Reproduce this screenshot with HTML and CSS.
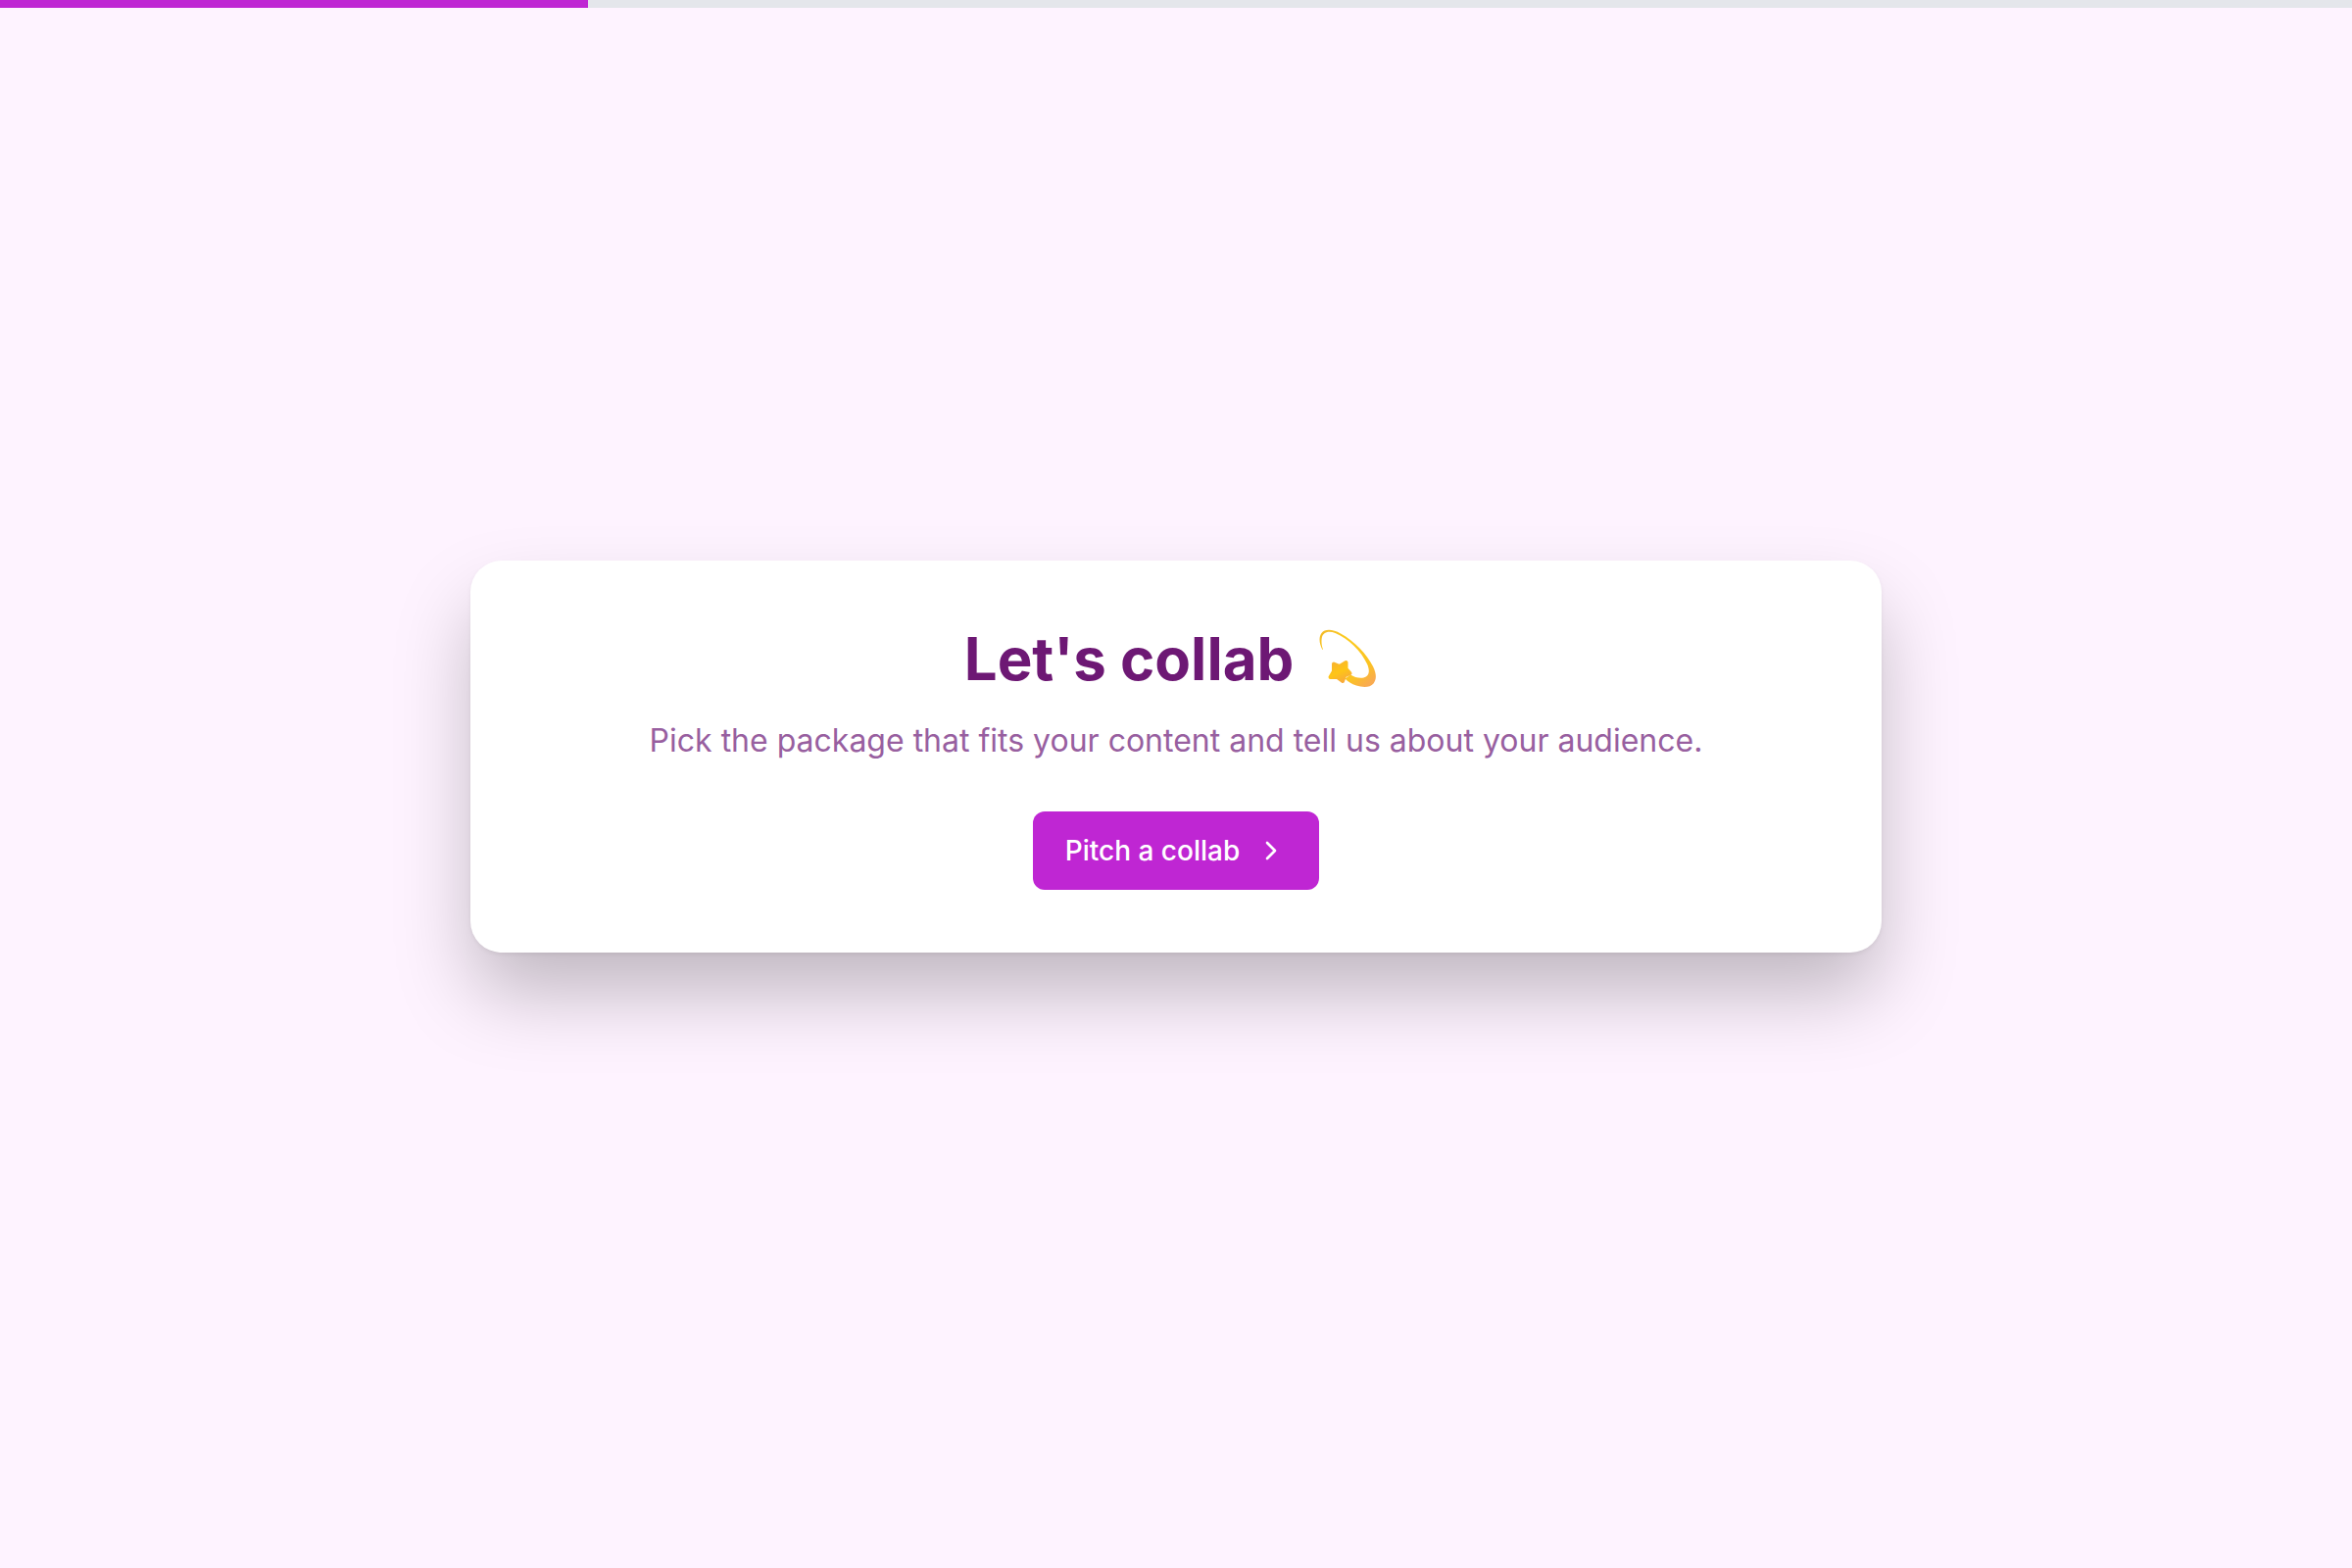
FILE: index.html
```html
<!DOCTYPE html>
<html lang="en">
<head>
  <meta charset="UTF-8">
  <meta name="viewport" content="width=device-width, initial-scale=1">
  <title>Let's collab</title>
  <link rel="stylesheet" href="styles.css">
</head>
<body>
  <div class="progress" role="progressbar" aria-label="Progress" aria-valuemin="0" aria-valuemax="100" aria-valuenow="25">
    <div class="progress-fill" style="width: 25%"></div>
  </div>

  <main>
    <section class="card">
      <h1>
        Let's collab
        <svg class="dizzy" viewBox="0 0 72 60" aria-hidden="true">
          <defs>
            <linearGradient id="trail" x1="0" y1="0" x2="0.8" y2="1">
              <stop offset="0" stop-color="#f2b92a"/>
              <stop offset="0.3" stop-color="#fccb20"/>
              <stop offset="0.8" stop-color="#fbc322"/>
              <stop offset="1" stop-color="#f9ab50"/>
            </linearGradient>
            <linearGradient id="star" x1="0.2" y1="0" x2="0.7" y2="1">
              <stop offset="0" stop-color="#f9b42e"/>
              <stop offset="0.5" stop-color="#fec516"/>
              <stop offset="1" stop-color="#f9ab3a"/>
            </linearGradient>
          </defs>
          <path fill="url(#trail)" d="M5.500 21C2 15 1.500 8 4.500 4C8-.5 16 0 24 4.500C38 12 51 26 57 38C60.500 45 61 51 57.500 55.500C54 60 46 59.500 40 57.500C35 56 31.500 53.500 28.500 50.500L34 46.500C38 49 43 50.500 47.500 49.500C53.500 48 54 42 51 35.500C45 22.500 32 9.500 18.500 4C11 1.200 5.500 3.500 4.700 9.500C4.200 13.500 4.700 17.500 6 20.500Z"/>
          <path fill="url(#star)" stroke="url(#star)" stroke-width="4" stroke-linejoin="round" d="M17 35.500L23 38L29.500 34L29.500 40.500L33.500 45L28 47.500L26 53L20.500 49L13.500 49L17 43Z"/>
        </svg>
      </h1>
      <p>Pick the package that fits your content and tell us about your audience.</p>
      <button type="button">
        Pitch a collab
        <svg class="chevron" viewBox="0 0 24 24" aria-hidden="true">
          <path d="m9 18 6-6-6-6"/>
        </svg>
      </button>
    </section>
  </main>
</body>
</html>
```
FILE: styles.css
```css
*{
  padding: 0;
  margin: 0;
  box-sizing: border-box;
}
body{
  display: flex;
  flex-direction: column;
  min-height: 100vh;
  background: #fef3ff;
  color: #6d1874;
  font-family: Inter, sans-serif;
}
.progress{
  height: 8px;
  background: #e4e6eb;
}
.progress-fill{
  height: 100%;
  background: #bf26d3;
}
main{
  flex: 1;
  display: flex;
  justify-content: center;
  align-items: center;
  padding-bottom: 64px;
}
.card{
  display: flex;
  flex-direction: column;
  align-items: center;
  width: 60%;
  padding: 64px;
  background: #fff;
  border-radius: 32px;
  box-shadow: 0 44px 80px -4px rgba(0, 0, 0, 0.25), 0 2px 4px rgba(0, 0, 0, 0.06);
  text-align: center;
}
h1{
  display: flex;
  align-items: center;
  gap: 24px;
  font-size: 60px;
  font-weight: 700;
  line-height: 72px;
}
.dizzy{
  width: 72px;
  height: 60px;
}
p{
  margin-top: 24px;
  color: #985fa0;
  font-size: 32px;
  line-height: 48px;
}
button{
  display: flex;
  align-items: center;
  gap: 16px;
  height: 80px;
  margin-top: 48px;
  padding: 0 33px;
  border: none;
  border-radius: 12px;
  background: #bf26d3;
  color: #fff;
  font-family: inherit;
  font-size: 28px;
  font-weight: 500;
  cursor: pointer;
}
.chevron{
  width: 32px;
  height: 32px;
  fill: none;
  stroke: currentColor;
  stroke-width: 2;
  stroke-linecap: round;
  stroke-linejoin: round;
}
```
